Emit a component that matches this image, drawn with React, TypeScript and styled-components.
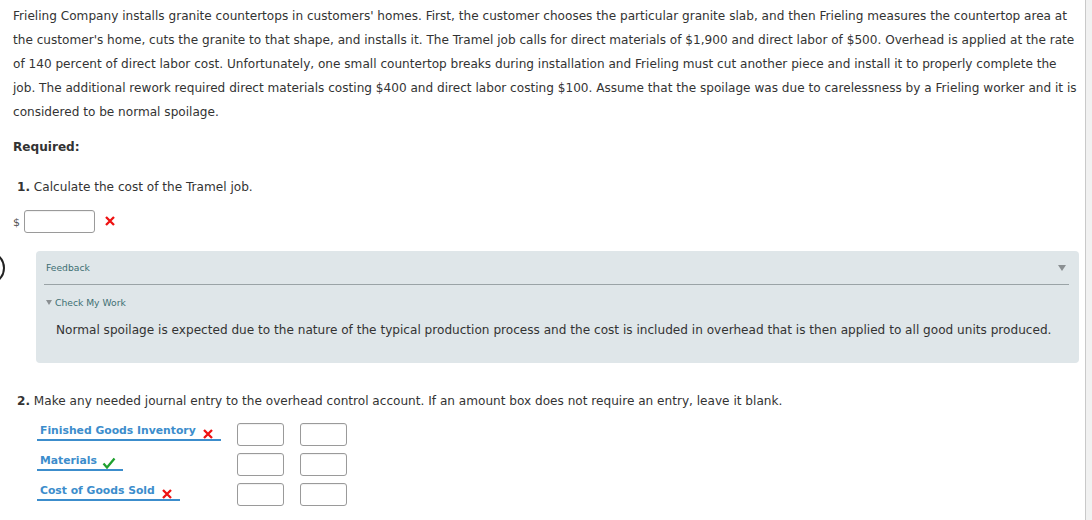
import React from "react";
import styled, { createGlobalStyle } from "styled-components";

const GlobalStyle = createGlobalStyle`
  html, body { margin: 0; padding: 0; background: #fff; overflow: hidden; }
  body { font-family: "DejaVu Sans", Verdana, sans-serif; color: #333; }
`;

const Page = styled.div`
  display: flex;
  width: 1092px;
  height: 520px;
  position: relative;
  overflow: hidden;
`;

const Content = styled.div`
  flex: 1;
  padding: 4px 6px 0 0;
  min-width: 0;
`;

const Scrollbar = styled.div`
  width: 6px;
  border-left: 1px solid #c9c9c9;
  background: #f1f1f1;
`;

const Intro = styled.p`
  margin: 0 0 0 13px;
  font-size: 12.1px;
  line-height: 24px;
  white-space: nowrap;
`;

const Required = styled.div`
  margin: 11px 0 0 13px;
  font-size: 12.1px;
  line-height: 24px;
  font-weight: bold;
`;

const Question = styled.div<{ $top: number }>`
  margin: ${(p) => p.$top}px 0 0 17px;
  font-size: 12.1px;
  line-height: 24px;
  white-space: nowrap;
  b { font-weight: bold; }
`;

const AnswerRow = styled.div`
  display: flex;
  align-items: center;
  margin: 11px 0 0 13px;
  height: 22px;
`;

const Dollar = styled.span`
  font-size: 11px;
  color: #555;
  margin: 2px 4px 0 0;
`;

const AmountInput = styled.div<{ $w: number; $h: number }>`
  box-sizing: border-box;
  width: ${(p) => p.$w}px;
  height: ${(p) => p.$h}px;
  border: 1px solid #9a9a9a;
  border-radius: 3px;
  background: #fff;
  box-shadow: inset 0 1px 1px rgba(0, 0, 0, 0.06);
`;

const Mark = styled.span<{ $ok?: boolean }>`
  display: inline-flex;
  align-items: center;
  margin-left: ${(p) => (p.$ok ? 5 : 6)}px;
  margin-top: ${(p) => (p.$ok ? 3 : 5)}px;
`;

const AnswerMark = styled.span`
  display: inline-flex;
  margin-left: 9px;
`;

const Circle = styled.div`
  position: absolute;
  left: -29px;
  top: 251px;
  width: 30px;
  height: 30px;
  border: 2.5px solid #222;
  border-radius: 50%;
`;

const FeedbackBox = styled.div`
  margin: 19px 0 0 36px;
  height: 112px;
  box-sizing: border-box;
  background: #dfe6e9;
  border-radius: 4px;
  padding: 8px 10px 0 8px;
`;

const FeedbackHead = styled.div`
  display: flex;
  align-items: center;
  justify-content: space-between;
  height: 17px;
  padding: 0 3px 8px 2px;
  border-bottom: 1px solid #9aa3a6;
  box-sizing: content-box;
`;

const SmallLabel = styled.span`
  font-family: "DejaVu Sans", Verdana, sans-serif;
  font-size: 9.2px;
  color: #3e6f73;
`;

const Tri = styled.span<{ $s: number }>`
  display: inline-block;
  width: 0;
  height: 0;
  border-left: ${(p) => p.$s}px solid transparent;
  border-right: ${(p) => p.$s}px solid transparent;
  border-top: ${(p) => p.$s * 1.5}px solid #8a8f92;
`;

const CheckRow = styled.div`
  display: flex;
  align-items: center;
  gap: 3px;
  margin: 12px 0 0 2px;
`;

const FeedbackText = styled.div`
  margin: 14px 0 0 12px;
  font-size: 12.1px;
  line-height: 16px;
`;

const Entries = styled.div`
  display: flex;
  flex-direction: column;
  gap: 7px;
  margin: 10px 0 0 37px;
`;

const EntryRow = styled.div`
  display: flex;
  align-items: flex-start;
  height: 23px;
`;

const AccountSlot = styled.div`
  width: 200px;
  display: flex;
`;

const Account = styled.span`
  display: inline-flex;
  align-items: center;
  height: 16px;
  line-height: 16px;
  padding: 0 7px 0 3px;
  border-bottom: 2px solid #3c8dcc;
  font-size: 10.8px;
  font-weight: bold;
  color: #3c8dcc;
  white-space: nowrap;
`;

const Amounts = styled.div`
  display: flex;
  gap: 16px;
`;

const RedX = () => (
  <svg width="12" height="10" viewBox="0 0 12 10">
    <path d="M2 1 L10 9 M10 1 L2 9" stroke="#ee1111" strokeWidth="2.3" strokeLinecap="butt" />
  </svg>
);

const GreenCheck = () => (
  <svg width="14" height="12" viewBox="0 0 14 12">
    <path d="M1.5 6.5 L5 10.5 L12.5 1.5" stroke="#1fa02f" strokeWidth="2.3" fill="none" />
  </svg>
);

const entries: { name: string; ok: boolean }[] = [
  { name: "Finished Goods Inventory", ok: false },
  { name: "Materials", ok: true },
  { name: "Cost of Goods Sold", ok: false },
];

export default function App() {
  return (
    <>
      <GlobalStyle />
      <Page>
        <Circle />
        <Content>
          <Intro>
            Frieling Company installs granite countertops in customers' homes. First, the customer chooses the particular granite slab, and then Frieling measures the countertop area at
            <br />
            the customer's home, cuts the granite to that shape, and installs it. The Tramel job calls for direct materials of $1,900 and direct labor of $500. Overhead is applied at the rate
            <br />
            of 140 percent of direct labor cost. Unfortunately, one small countertop breaks during installation and Frieling must cut another piece and install it to properly complete the
            <br />
            job. The additional rework required direct materials costing $400 and direct labor costing $100. Assume that the spoilage was due to carelessness by a Frieling worker and it is
            <br />
            considered to be normal spoilage.
          </Intro>
          <Required>Required:</Required>
          <Question $top={16}>
            <b>1.</b> Calculate the cost of the Tramel job.
          </Question>
          <AnswerRow>
            <Dollar>$</Dollar>
            <AmountInput $w={71} $h={23} />
            <AnswerMark>
              <RedX />
            </AnswerMark>
          </AnswerRow>
          <FeedbackBox>
            <FeedbackHead>
              <SmallLabel>Feedback</SmallLabel>
              <Tri $s={4} />
            </FeedbackHead>
            <CheckRow>
              <Tri $s={3.5} />
              <SmallLabel>Check My Work</SmallLabel>
            </CheckRow>
            <FeedbackText>
              Normal spoilage is expected due to the nature of the typical production process and the cost is included in overhead that is then applied to all good units produced.
            </FeedbackText>
          </FeedbackBox>
          <Question $top={26}>
            <b>2.</b> Make any needed journal entry to the overhead control account. If an amount box does not require an entry, leave it blank.
          </Question>
          <Entries>
            {entries.map((e) => (
              <EntryRow key={e.name}>
                <AccountSlot>
                  <Account>
                    {e.name}
                    <Mark $ok={e.ok}>{e.ok ? <GreenCheck /> : <RedX />}</Mark>
                  </Account>
                </AccountSlot>
                <Amounts>
                  <AmountInput $w={47} $h={23} />
                  <AmountInput $w={47} $h={23} />
                </Amounts>
              </EntryRow>
            ))}
          </Entries>
        </Content>
        <Scrollbar />
      </Page>
    </>
  );
}
